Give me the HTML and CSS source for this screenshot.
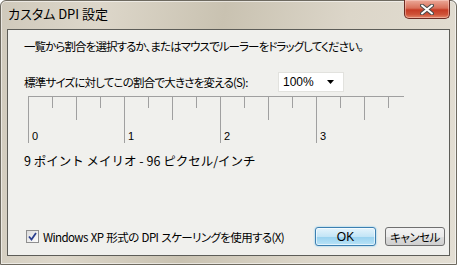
FILE: index.html
```html
<!DOCTYPE html>
<html>
<head>
	<meta charset="utf-8">
	<meta name="viewport" content="width=device-width, initial-scale=1">
	<title>カスタム DPI 設定</title>
	<link rel="stylesheet" href="styles.css">
</head>
<body>
<div class="window">
	<!-- glass title bar -->
	<div class="titlebar">
		<span class="title">カスタム DPI 設定</span>
		<button class="close" aria-label="閉じる">
			<svg viewBox="0 0 14 11" width="14" height="11">
				<path d="M 2 1.5 L 12 9.5 M 12 1.5 L 2 9.5" stroke="#4b4b4b" stroke-width="4" stroke-linecap="round"></path>
				<path d="M 2 1.5 L 12 9.5 M 12 1.5 L 2 9.5" stroke="#fff" stroke-width="2" stroke-linecap="round"></path>
			</svg>
		</button>
	</div>

	<div class="client">
		<p class="intro">一覧から割合を選択するか、またはマウスでルーラーをドラッグしてください。</p>

		<div class="scale-row">
			<label class="scale-label">標準サイズに対してこの割合で大きさを変える(S):</label>
			<div class="combo">
				<span>100%</span>
				<svg viewBox="0 0 7 4" width="7" height="4"><path d="M 0 0 h 7 l -3.5 4 z" fill="#000"></path></svg>
			</div>
		</div>

		<!-- ruler: one inch = 96px, ticks every quarter -->
		<svg class="ruler" viewBox="0 0 376 47" width="376" height="47">
			<g stroke="#a0a0a0" stroke-width="1">
				<path d="M 0 0.5 H 376"></path>
				<path d="M 0.5 0 V 47 M 96.5 0 V 47 M 192.5 0 V 47 M 288.5 0 V 47"></path>
				<path d="M 48.5 0 V 24 M 144.5 0 V 24 M 240.5 0 V 24 M 336.5 0 V 24"></path>
				<path d="M 24.5 0 V 12 M 72.5 0 V 12 M 120.5 0 V 12 M 168.5 0 V 12 M 216.5 0 V 12 M 264.5 0 V 12 M 312.5 0 V 12 M 360.5 0 V 12"></path>
			</g>
			<g class="ruler-labels">
				<text x="4" y="44">0</text>
				<text x="100" y="44">1</text>
				<text x="196" y="44">2</text>
				<text x="292" y="44">3</text>
			</g>
		</svg>

		<p class="font-info">9 ポイント メイリオ - 96 ピクセル/インチ</p>

		<div class="footer">
			<label class="check">
				<span class="box">
					<svg viewBox="0 0 9 9" width="9" height="9"><path d="M 1 4.5 L 3.5 7.5 L 8 1" fill="none" stroke="#2a3f8f" stroke-width="1.8"></path></svg>
				</span>
				<span>Windows XP 形式の DPI スケーリングを使用する(X)</span>
			</label>
			<div class="buttons">
				<button class="btn btn-default">OK</button>
				<button class="btn">キャンセル</button>
			</div>
		</div>
	</div>
</div>
</body>
</html>
```

FILE: styles.css
```css
* {
  box-sizing: border-box;
  padding: 0;
  margin: 0;
}
body {
  background: #fff;
  font-family: "Noto Sans CJK JP", "Noto Sans", sans-serif;
  font-size: 12px;
  color: #000;
}

/* window frame with an aero-like glass look */
.window {
  width: 457px;
  height: 265px;
  display: flex;
  flex-direction: column;
  border: 1px solid #6e6a60;
  border-radius: 6px 6px 0 0;
  background: linear-gradient(100deg, #cfc9bb 0%, #ddd7ca 20%, #c9c2b1 45%, #dcd6c9 70%, #e3ded3 100%);
  box-shadow: inset 0 0 0 1px rgba(255, 255, 255, 0.55);
}
.titlebar {
  height: 28px;
  display: flex;
  align-items: flex-start;
  justify-content: space-between;
  padding-left: 7px;
}
.title {
  font-size: 13px;
  line-height: 16px;
  margin-top: 5px;
  font-feature-settings: "palt";
}
.close {
  width: 46px;
  height: 19px;
  margin-right: 6px;
  margin-top: -1px;
  border: 1px solid #6c2a22;
  border-top: none;
  border-radius: 0 0 5px 5px;
  background: linear-gradient(#eba999 0%, #d9705a 45%, #c63b25 55%, #cf5238 80%, #e2876a 100%);
  box-shadow: inset 0 0 0 1px rgba(255, 220, 210, 0.45);
  display: flex;
  align-items: center;
  justify-content: center;
}

/* client area */
.client {
  flex: 1;
  margin: 0 6px 8px 6px;
  border: 1px solid #5d5d58;
  background: #f0f0ed;
  display: flex;
  flex-direction: column;
  padding: 8px 4px 9px 16px;
  font-size: 11.5px;
  letter-spacing: -0.9px;
  font-feature-settings: "palt";
}
.intro {
  line-height: 16px;
  white-space: nowrap;
}
.scale-row {
  display: flex;
  align-items: center;
  margin-top: 18px;
}
.scale-label {
  flex: 0 0 254px;
  line-height: 16px;
  letter-spacing: -0.8px;
  white-space: nowrap;
}
.combo {
  width: 66px;
  height: 20px;
  border: 1px solid #e2e2de;
  background: #fff;
  display: flex;
  align-items: center;
  justify-content: space-between;
  padding: 0 9px 0 4px;
  font-family: "Liberation Sans", sans-serif;
  font-size: 12px;
  letter-spacing: 0;
}
.ruler {
  display: block;
  margin: 4px 0 0 4px;
}
.ruler-labels text {
  font-family: "Liberation Sans", sans-serif;
  font-size: 11px;
  letter-spacing: 0;
  fill: #000;
}
.font-info {
  font-size: 12.5px;
  line-height: 18px;
  letter-spacing: 0;
  font-feature-settings: normal;
  margin-top: 9px;
}

/* footer: checkbox and dialog buttons */
.footer {
  margin-top: auto;
  display: flex;
  align-items: center;
  justify-content: space-between;
}
.check {
  display: flex;
  align-items: center;
  gap: 4px;
  margin-left: 2px;
  line-height: 16px;
  letter-spacing: -0.6px;
  word-spacing: 1px;
  white-space: nowrap;
}
.box {
  width: 13px;
  height: 13px;
  border: 1px solid #8f8f8f;
  background: linear-gradient(135deg, #dcdcdc, #fdfdfd);
  display: flex;
  align-items: center;
  justify-content: center;
}
.buttons {
  display: flex;
  gap: 9px;
}
.btn {
  width: 60px;
  height: 19px;
  border: 1px solid #707070;
  border-radius: 3px;
  background: linear-gradient(#f3f3f3 0%, #ebebeb 50%, #dddddd 51%, #cfcfcf 100%);
  font-family: "Noto Sans CJK JP", sans-serif;
  font-size: 11.5px;
  line-height: 16px;
  letter-spacing: -0.5px;
  font-feature-settings: "palt";
  color: #000;
}
.btn-default {
  width: 61px;
  border-color: #3c7fb1;
  background: linear-gradient(#e5f4fc 0%, #c4e5f6 50%, #98d1ef 51%, #b9e3f7 100%);
  box-shadow: 0 0 2px #6cc3f0, inset 0 0 0 1px rgba(255, 255, 255, 0.6);
  font-family: "Liberation Sans", sans-serif;
  font-size: 12px;
  letter-spacing: 0;
}
```
